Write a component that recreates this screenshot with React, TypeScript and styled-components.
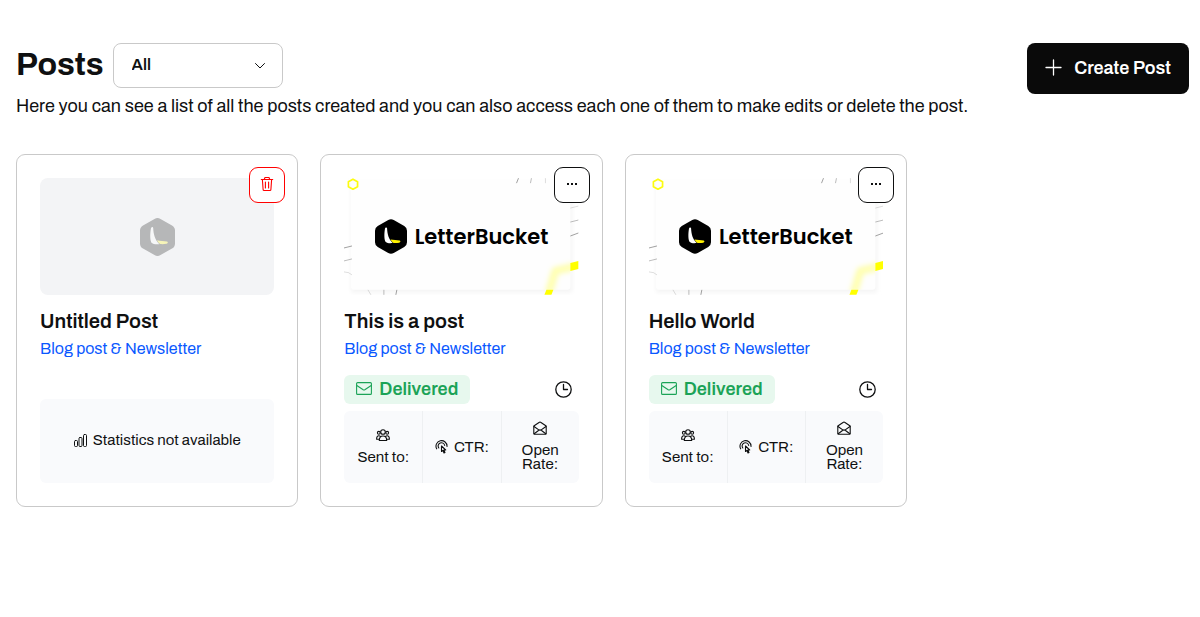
import React from "react";
import styled, { createGlobalStyle, css } from "styled-components";

const GlobalStyle = createGlobalStyle`
  *, *::before, *::after { box-sizing: border-box; }
  body {
    margin: 0;
    background: #fff;
    color: #0f1011;
    font-family: Archivo, "Liberation Sans", Arial, sans-serif;
  }
  h1, h2, p { margin: 0; }
  button, select { font: inherit; color: inherit; }
  svg { display: block; flex: none; }
`;

const Page = styled.main`
  padding: 43px 11px 24px 16px;
`;

const Header = styled.header`
  display: flex;
  justify-content: space-between;
  align-items: flex-start;
  gap: 24px;
`;

const TitleRow = styled.div`
  display: flex;
  align-items: center;
  gap: 9px;
`;

const Title = styled.h1`
  padding-bottom: 2px;
  font-size: 32px;
  line-height: 40px;
  font-weight: 700;
`;

const Filter = styled.label`
  display: grid;
  align-items: center;
  width: 170px;
  > * { grid-area: 1 / 1; }
  > svg {
    justify-self: end;
    margin-right: 17px;
    pointer-events: none;
  }
`;

const FilterSelect = styled.select`
  appearance: none;
  width: 100%;
  height: 45px;
  padding: 0 36px 2px 18px;
  border: 1px solid #c9c9c9;
  border-radius: 8px;
  background: #fff;
  font-size: 16px;
  font-weight: 600;
`;

const Intro = styled.p`
  margin-top: 6px;
  font-size: 18px;
  line-height: 24px;
`;

const CreateButton = styled.button`
  display: flex;
  align-items: center;
  gap: 12px;
  flex: none;
  height: 51px;
  padding: 0 18px 2px;
  border: 0;
  border-radius: 8px;
  background: #0a0a0a;
  color: #fff;
  font-size: 18px;
  font-weight: 600;
  cursor: pointer;
`;

const Grid = styled.section`
  display: grid;
  grid-template-columns: repeat(auto-fit, minmax(260px, 1fr));
  gap: 22px;
  max-width: 891px;
  margin-top: 36px;
`;

const Card = styled.article`
  position: relative;
  display: flex;
  flex-direction: column;
  min-height: 353px;
  padding: 23px;
  border: 1px solid #c9c9c9;
  border-radius: 9px;
  background: #fff;
`;

const Corner = styled.button<{ $danger?: boolean }>`
  position: absolute;
  top: 12px;
  right: 12px;
  display: flex;
  align-items: center;
  justify-content: center;
  width: 36px;
  height: 36px;
  padding: 0 0 2px;
  border: 1px solid ${(p) => (p.$danger ? "#ff0000" : "#0f1011")};
  border-radius: 9px;
  background: #fff;
  color: ${(p) => (p.$danger ? "#ff0000" : "#0f1011")};
  cursor: pointer;
`;

const Thumb = styled.div<{ $empty?: boolean }>`
  display: grid;
  place-items: center;
  height: 117px;
  overflow: hidden;
  > * { grid-area: 1 / 1; }
  ${(p) => p.$empty && css`
    border-radius: 8px;
    background: #f3f4f6;
  `}
`;

const Brand = styled.div`
  display: flex;
  align-items: center;
  gap: 8px;
  color: #000;
  font-family: Poppins, Inter, sans-serif;
  font-size: 21px;
  line-height: 36px;
  font-weight: 600;
`;

const PostTitle = styled.h2`
  margin-top: 14px;
  font-size: 20px;
  line-height: 24px;
  font-weight: 600;
`;

const Kind = styled.a`
  margin-top: 6px;
  align-self: flex-start;
  color: #0a58ff;
  font-size: 16px;
  line-height: 20px;
  text-decoration: none;
`;

const StatusRow = styled.div`
  display: flex;
  align-items: center;
  justify-content: space-between;
  margin-top: auto;
  padding-right: 7px;
`;

const Badge = styled.span`
  display: flex;
  align-items: center;
  gap: 7px;
  height: 29px;
  padding: 0 12px 2px;
  border-radius: 6px;
  background: #e7f8ee;
  color: #1ba357;
  font-size: 18px;
  font-weight: 600;
`;

const Stats = styled.div`
  display: grid;
  grid-template-columns: repeat(3, 1fr);
  height: 72px;
  margin-top: 7px;
  border-radius: 6px;
  background: #f9fafc;
`;

const Stat = styled.div<{ $inline?: boolean }>`
  display: flex;
  flex-direction: ${(p) => (p.$inline ? "row" : "column")};
  align-items: center;
  justify-content: center;
  gap: ${(p) => (p.$inline ? 6 : 8)}px;
  padding-bottom: ${(p) => (p.$inline ? 0 : 2)}px;
  font-size: 15px;
  line-height: 14px;
  text-align: center;
  & + & { border-left: 1px solid #eef0f2; }
`;

const NoStats = styled.div`
  display: flex;
  align-items: center;
  justify-content: center;
  gap: 6px;
  height: 84px;
  margin-top: auto;
  padding-bottom: 2px;
  border-radius: 6px;
  background: #f9fafc;
  font-size: 15px;
`;

const line = { fill: "none", stroke: "currentColor", strokeLinecap: "round", strokeLinejoin: "round" } as const;

const ChevronIcon = () => (
  <svg width="12" height="12" viewBox="0 0 12 12" {...line} aria-hidden="true">
    <path d="M1.5 3.500 6 8l4.500-4.500" />
  </svg>
);

const PlusIcon = () => (
  <svg width="17" height="17" viewBox="0 0 17 17" {...line} strokeWidth="1.3" aria-hidden="true">
    <path d="M8.500 1v15M1 8.500h15" />
  </svg>
);

const TrashIcon = () => (
  <svg width="14" height="16" viewBox="0 0 14 16" {...line} strokeWidth="1.1" aria-hidden="true">
    <path d="M1.300 3.500h11.400M4.300 3.300 5 1.500h4l.7 1.800M2.400 3.700l.7 9.800c0 .6.400 1 1 1h5.800c.6 0 1-.4 1-1l.7-9.800M5.400 6v6M8.600 6v6" />
  </svg>
);

const DotsIcon = () => (
  <svg width="12" height="12" viewBox="0 0 12 12" fill="currentColor" aria-hidden="true">
    <rect x="1" y="5" width="2" height="2" />
    <rect x="5" y="5" width="2" height="2" />
    <rect x="9" y="5" width="2" height="2" />
  </svg>
);

const BarsIcon = () => (
  <svg width="13" height="13" viewBox="0 0 13 13" {...line} aria-hidden="true">
    <rect x=".5" y="6.500" width="3" height="6" rx="1" />
    <rect x="5" y="3.500" width="3" height="9" rx="1" />
    <rect x="9.500" y=".5" width="3" height="12" rx="1" />
  </svg>
);

const EnvelopeIcon = () => (
  <svg width="16" height="13" viewBox="0 0 16 13" {...line} strokeWidth="1.100" aria-hidden="true">
    <rect x=".6" y=".6" width="14.800" height="11.800" rx="1" />
    <path d="m.8 3.500 6.400 4.200c.5.300 1.100.3 1.600 0l6.400-4.200" />
  </svg>
);

const ClockIcon = () => (
  <svg width="17" height="17" viewBox="0 0 17 17" {...line} strokeWidth="1.300" role="img" aria-label="Sent time">
    <circle cx="8.500" cy="8.500" r="7.700" />
    <path d="M8.500 3.500v5h4" />
  </svg>
);

const PeopleIcon = () => (
  <svg width="14" height="14" viewBox="0 0 14 14" {...line} strokeWidth="1.100" aria-hidden="true">
    <circle cx="7" cy="4" r="2.300" />
    <circle cx="2.800" cy="4.800" r="1.400" />
    <circle cx="11.200" cy="4.800" r="1.400" />
    <path d="M3.300 12.500c0-2.800 1.600-4.500 3.700-4.500s3.700 1.700 3.700 4.500zM3.300 11.300H.6c0-2.200.9-3.500 2.300-3.500.6 0 1.100.2 1.500.6M10.700 11.300h2.700c0-2.200-.9-3.500-2.300-3.500-.6 0-1.100.2-1.500.6" />
  </svg>
);

const ClickIcon = () => (
  <svg width="13" height="14" viewBox="0 0 13 14" {...line} strokeWidth="1.100" aria-hidden="true">
    <path d="M1.700 8.800A5.500 5.500 0 1 1 12 6.500M3.800 8A3.300 3.300 0 1 1 9.700 5.500" />
    <path d="M6.500 6v5.500l1.400-1.200 1.100 2.700 1-.4-1.100-2.600h1.800z" />
  </svg>
);

const OpenMailIcon = () => (
  <svg width="14" height="14" viewBox="0 0 14 14" {...line} strokeWidth="1.100" aria-hidden="true">
    <path d="M.8 5 6.400 1.200c.4-.3.800-.3 1.200 0L13.200 5v7.400c0 .4-.3.800-.8.800H1.600c-.5 0-.8-.4-.8-.8z" />
    <path d="m1 5.500 4.800 3.400M13 5.500 8.200 8.900M1.200 12.700l4.300-3.200c.9-.7 2.100-.7 3 0l4.300 3.200" />
  </svg>
);

const HexLogo = ({ size, faded }: { size: number; faded?: boolean }) => (
  <svg width={size} height={size + 3} viewBox="0 0 35 38" opacity={faded ? 0.25 : 1} aria-hidden="true">
    <path d="M14.500.9a6 6 0 0 1 6 0l11.500 6.500a6 6 0 0 1 3 5.200v12.800a6 6 0 0 1-3 5.200l-11.500 6.500a6 6 0 0 1-6 0L3 30.600a6 6 0 0 1-3-5.200V12.600a6 6 0 0 1 3-5.200z" fill="#000" />
    <path d="M11.800 9.200c.8-.3 1.300.1 1.400.9.300 6.200 1.500 11.400 6.100 16.100-3.400.3-6 .1-7.500-1.200-1.800-1.800-1.900-9-.9-14.600.1-.6.4-1 .9-1.200z" fill="#fff" />
    <path d="M17 22.300c3 .6 7.200.8 10 1.200 1.300.3 1.100 1.900-.4 2.200-2 .5-4.600.5-6.300.4-1.700-1-2.700-2.400-3.300-3.800z" fill="#fff200" />
  </svg>
);

const CoverArt = ({ id }: { id: string }) => (
  <svg width="100%" height="117" viewBox="0 0 235 117" fill="none" aria-hidden="true">
    <defs>
      <filter id={`${id}-soft`} x="-50%" y="-50%" width="200%" height="200%">
        <feGaussianBlur stdDeviation="2.500" />
      </filter>
      <filter id={`${id}-shade`} x="-10%" y="-10%" width="120%" height="120%">
        <feGaussianBlur stdDeviation="2" />
      </filter>
      <clipPath id={`${id}-panel`}>
        <rect x="7" y="2" width="220" height="110" rx="3" />
      </clipPath>
    </defs>
    <rect x="7" y="4" width="222" height="111" rx="3" fill="#f5f5f5" filter={`url(#${id}-shade)`} />
    <rect x="7" y="2" width="220" height="110" rx="3" fill="#fefefe" />
    <g clipPath={`url(#${id}-panel)`}>
      <path d="M205 116 212 93l22-5" stroke="#ffff80" strokeOpacity=".6" strokeWidth="8" strokeLinejoin="round" filter={`url(#${id}-soft)`} />
    </g>
    <path d="m227 85 8-2v8l-8 2zM203 112h7l-2 5h-7z" fill="#ff0" />
    <path d="m9 1 4.600 2.500v5L9 11 4.400 8.500v-5z" stroke="#fcfc10" strokeWidth="1.700" strokeLinejoin="round" />
    <g stroke="#777" strokeWidth=".7">
      <path d="m0 70 8-2M53 112l-1 5M175 0l-2 5M227 58l8-3" />
      <path d="m0 83 8-2M40 112v5M227 44l8-2M188 0l-1 5" opacity=".7" />
      <path d="M0 94q5 0 8 3M24 112l3 5M227 30l8-2M202 0v5" opacity=".35" />
    </g>
  </svg>
);

const Cover = ({ id }: { id: string }) => (
  <Thumb>
    <CoverArt id={id} />
    <Brand>
      <HexLogo size={32} />
      LetterBucket
    </Brand>
  </Thumb>
);

const PostCard = ({ id, title, delivered }: { id: string; title: string; delivered: boolean }) => (
  <Card>
    {delivered ? <Cover id={id} /> : <Thumb $empty><HexLogo size={35} faded /></Thumb>}
    <Corner type="button" $danger={!delivered} aria-label={delivered ? "Post actions" : "Delete post"}>
      {delivered ? <DotsIcon /> : <TrashIcon />}
    </Corner>
    <PostTitle>{title}</PostTitle>
    <Kind href="#">Blog post &amp; Newsletter</Kind>
    {delivered ? (
      <>
        <StatusRow>
          <Badge><EnvelopeIcon />Delivered</Badge>
          <ClockIcon />
        </StatusRow>
        <Stats>
          <Stat><PeopleIcon />Sent to:</Stat>
          <Stat $inline><ClickIcon />CTR:</Stat>
          <Stat><OpenMailIcon /><span>Open<br />Rate:</span></Stat>
        </Stats>
      </>
    ) : (
      <NoStats><BarsIcon />Statistics not available</NoStats>
    )}
  </Card>
);

const posts = [
  { id: "untitled", title: "Untitled Post", delivered: false },
  { id: "first", title: "This is a post", delivered: true },
  { id: "hello", title: "Hello World", delivered: true },
];

export default function App() {
  return (
    <>
      <GlobalStyle />
      <Page>
        <Header>
          <div>
            <TitleRow>
              <Title>Posts</Title>
              <Filter>
                <FilterSelect aria-label="Filter posts" defaultValue="all">
                  <option value="all">All</option>
                </FilterSelect>
                <ChevronIcon />
              </Filter>
            </TitleRow>
            <Intro>
              Here you can see a list of all the posts created and you can also access each one of them to make edits or delete the post.
            </Intro>
          </div>
          <CreateButton type="button"><PlusIcon />Create Post</CreateButton>
        </Header>
        <Grid>
          {posts.map((post) => <PostCard key={post.id} {...post} />)}
        </Grid>
      </Page>
    </>
  );
}
